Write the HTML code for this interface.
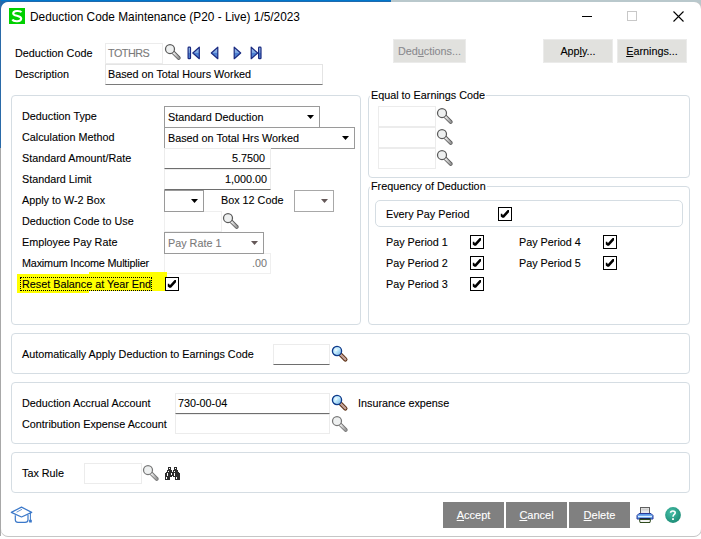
<!DOCTYPE html>
<html><head><meta charset="utf-8">
<style>
html,body{margin:0;padding:0;}
body{width:701px;height:539px;position:relative;overflow:hidden;background:#fff;font-family:"Liberation Sans",sans-serif;font-size:10.5px;color:#000;}
.a{position:absolute;}
.t{position:absolute;white-space:nowrap;line-height:12px;font-size:10.8px;-webkit-text-stroke-width:0.1px;}
.grp{position:absolute;border:1px solid #d5dde3;border-radius:4px;box-sizing:border-box;}
.inp{position:absolute;box-sizing:border-box;border:1px solid #ececec;background:#fff;}
.inpd{position:absolute;box-sizing:border-box;border:1px solid #ececec;border-bottom:1px solid #6e6e6e;background:#fff;}
.cmb{position:absolute;box-sizing:border-box;border:1px solid #9a9a9a;background:#fff;}
.arr{position:absolute;width:7px;height:4px;background:#000;clip-path:polygon(0 0,100% 0,50% 100%);}
.arrg{background:#645858;}
.btn{position:absolute;box-sizing:border-box;background:#e1e1de;border:1px solid #ebebea;text-align:center;}
.bbtn{position:absolute;box-sizing:border-box;background:#808080;color:#fff;text-align:center;font-size:11px;}
.chk{position:absolute;box-sizing:border-box;width:14px;height:14px;border:1px solid #000;background:#fff;}
.chk svg{position:absolute;left:0;top:0;}
.lbl{position:absolute;background:#fff;padding:0 1px;}
</style></head><body>
<svg width="0" height="0" style="position:absolute">
<defs>
<linearGradient id="hg" x1="0" y1="0" x2="1" y2="1"><stop offset="0" stop-color="#f4f4f4"/><stop offset="1" stop-color="#9a9a9a"/></linearGradient>
<linearGradient id="bg" x1="0" y1="0" x2="1" y2="1"><stop offset="0" stop-color="#8cc0ec"/><stop offset="0.45" stop-color="#c8f0ff"/><stop offset="1" stop-color="#6aa8e0"/></linearGradient>
<linearGradient id="ng" x1="0" y1="0" x2="0" y2="1"><stop offset="0" stop-color="#a8c8f0"/><stop offset="0.5" stop-color="#7aa4e0"/><stop offset="0.5" stop-color="#4a7ed0"/><stop offset="1" stop-color="#5a8ad8"/></linearGradient>
<g id="mag">
 <line x1="11.2" y1="10.4" x2="16.7" y2="15.9" stroke="#5e5e5e" stroke-width="4" stroke-linecap="round"/>
 <line x1="11.2" y1="10.4" x2="16.7" y2="15.9" stroke="url(#hg)" stroke-width="2.1" stroke-linecap="round"/>
 <circle cx="8" cy="7" r="4.5" fill="#eef0f0" stroke="#5a5a5a" stroke-width="1.25"/>
</g>
<g id="magl">
 <line x1="11.2" y1="10.4" x2="16.7" y2="15.9" stroke="#777" stroke-width="4" stroke-linecap="round"/>
 <line x1="11.2" y1="10.4" x2="16.7" y2="15.9" stroke="url(#hg)" stroke-width="2.1" stroke-linecap="round"/>
 <circle cx="8" cy="7" r="4.5" fill="#eef0f0" stroke="#777" stroke-width="1.25"/>
</g>
<g id="magb">
 <line x1="10.5" y1="10.5" x2="15.4" y2="15.4" stroke="#5a2e10" stroke-width="4.2" stroke-linecap="round"/>
 <line x1="10.5" y1="10.5" x2="15.4" y2="15.4" stroke="#c4a49c" stroke-width="2.2" stroke-linecap="round"/>
 <circle cx="7" cy="7" r="4.6" fill="url(#bg)" stroke="#0e3a8a" stroke-width="1.3"/>
 <circle cx="5.8" cy="5.6" r="1.6" fill="#fff" opacity="0.6"/>
</g>
<g id="tri"><path d="M7.3 0.7 L7.3 12.2 L0.8 6.45 Z" fill="url(#ng)" stroke="#1a2a80" stroke-width="1.2" stroke-linejoin="round"/></g>
<g id="bar"><rect x="0.6" y="0.7" width="2.4" height="11.5" rx="0.8" fill="url(#ng)" stroke="#1a2a80" stroke-width="1.2"/></g>
<g id="chk"><path d="M1.8 5.8 L3.2 5.8 L3.8 7.2 L8.6 1.9 L10 1.9 L10 4.2 L5 9.7 L3.4 9.7 L1.8 8.4 Z" fill="#000"/></g>
</defs></svg>
<!-- window frame -->
<div class="a" style="left:0;top:0;width:391px;height:12px;background:#1f6aad"></div>
<div class="a" style="left:0;top:0;width:391px;height:1px;background:#0077cc"></div>
<div class="a" style="left:391px;top:0;width:310px;height:12px;background:#b9c8cc"></div>
<div class="a" style="left:0;top:0;width:1px;height:148px;background:#2a6aa8"></div>
<div class="a" style="left:0;top:148px;width:1px;height:390px;background:#a8a8a8"></div>
<div class="a" style="left:0;top:536px;width:701px;height:3px;background:#fff"></div>
<div class="a" style="left:1px;top:2px;width:700px;height:534px;background:#fff;border-radius:7px;box-shadow:0 1px 0 #c6c6c6,1px 0 0 #c6c6c6"></div>
<!-- title -->
<div class="a" style="left:9px;top:8px;width:16px;height:16px;background:#00d000"></div>
<svg class="a" style="left:9px;top:8px" width="16" height="16" viewBox="0 0 16 16"><path d="M12.4 4.3 C11.4 2.5 4.2 2.3 4.2 5.4 C4.2 8.3 12.2 7.3 12.2 10.6 C12.2 14.1 4.6 13.9 3.4 11.6" fill="none" stroke="#fff" stroke-width="2.1"/></svg>
<div class="t" style="left:30px;top:10.5px;font-size:11.85px;line-height:13px;-webkit-text-stroke-width:0">Deduction Code Maintenance (P20 - Live) 1/5/2023</div>
<!-- min / max / close -->
<div class="a" style="left:582px;top:16px;width:10px;height:1px;background:#000"></div>
<div class="a" style="left:627px;top:11px;width:10px;height:10px;box-sizing:border-box;border:1px solid #c8c8c8"></div>
<svg class="a" style="left:672px;top:10px" width="13" height="13" viewBox="0 0 13 13"><path d="M1.5 1.5 L11.5 11.5 M11.5 1.5 L1.5 11.5" stroke="#000" stroke-width="1.1"/></svg>

<!-- header fields -->
<div class="t" style="left:15px;top:47px">Deduction Code</div>
<div class="t" style="left:15px;top:68px">Description</div>
<div class="inp" style="left:105px;top:43px;width:58px;height:21px"></div>
<div class="t" style="left:108px;top:47px;color:#7a7a7a;letter-spacing:-0.5px">TOTHRS</div>
<div class="inpd" style="left:105px;top:64px;width:218px;height:21px;border-color:#e4e4e4 #e4e4e4 #7a7a7a #e4e4e4"></div>
<div class="t" style="left:108px;top:68px">Based on Total Hours Worked</div>

<!-- buttons top -->
<div class="btn" style="left:393px;top:39px;width:73px;height:24px"></div>
<div class="t" style="left:393px;top:45px;width:73px;text-align:center;color:#8a8a8e">Ded<u>u</u>ctions...</div>
<div class="btn" style="left:543px;top:39px;width:70px;height:24px"></div>
<div class="t" style="left:543px;top:45px;width:70px;text-align:center">App<u>l</u>y...</div>
<div class="btn" style="left:617px;top:39px;width:70px;height:24px"></div>
<div class="t" style="left:617px;top:45px;width:70px;text-align:center"><u>E</u>arnings...</div>

<!-- left group -->
<div class="grp" style="left:11px;top:95px;width:350px;height:230px"></div>
<div class="t" style="left:22px;top:110px">Deduction Type</div>
<div class="t" style="left:22px;top:131px">Calculation Method</div>
<div class="t" style="left:22px;top:152px">Standard Amount/Rate</div>
<div class="t" style="left:22px;top:173px">Standard Limit</div>
<div class="t" style="left:22px;top:194px">Apply to W-2 Box</div>
<div class="t" style="left:22px;top:215px">Deduction Code to Use</div>
<div class="t" style="left:22px;top:236px">Employee Pay Rate</div>
<div class="t" style="left:22px;top:257px;letter-spacing:-0.18px">Maximum Income Multiplier</div>

<div class="cmb" style="left:164px;top:106px;width:156px;height:22px"></div>
<div class="t" style="left:168px;top:111px">Standard Deduction</div>
<div class="arr" style="left:307px;top:115px"></div>
<div class="cmb" style="left:164px;top:127px;width:191px;height:22px"></div>
<div class="t" style="left:168px;top:132px">Based on Total Hrs Worked</div>
<div class="arr" style="left:342px;top:136px"></div>

<div class="inpd" style="left:164px;top:148px;width:107px;height:21px"></div>
<div class="t" style="left:164px;top:152px;width:101px;text-align:right">5.7500</div>
<div class="inpd" style="left:164px;top:169px;width:107px;height:21px"></div>
<div class="t" style="left:164px;top:173px;width:103px;text-align:right">1,000.00</div>

<div class="inp" style="left:164px;top:211px;width:58px;height:21px;border-color:#efefef"></div>
<div class="cmb" style="left:164px;top:190px;width:40px;height:22px"></div>
<div class="arr" style="left:191px;top:199px"></div>
<div class="t" style="left:221px;top:194px">Box 12 Code</div>
<div class="cmb" style="left:294px;top:190px;width:40px;height:22px;border-color:#a8a8a8"></div>
<div class="arr arrg" style="left:321px;top:199px"></div>


<div class="inp" style="left:164px;top:253px;width:107px;height:21px;border-color:#efefef"></div>
<div class="cmb" style="left:164px;top:232px;width:100px;height:22px;border-color:#9a9a9a"></div>
<div class="t" style="left:168px;top:237px;color:#7a7a7a">Pay Rate 1</div>
<div class="arr arrg" style="left:251px;top:241px"></div>
<div class="t" style="left:164px;top:257px;width:103px;text-align:right;color:#7a7a7a">.00</div>

<!-- highlight -->
<div class="a" style="left:17px;top:274px;width:72px;height:19px;background:#ffff00"></div>
<div class="a" style="left:89px;top:272px;width:78px;height:19px;background:#ffff00"></div>
<div class="a" style="left:20px;top:277px;width:132px;height:14px;box-sizing:border-box;border:1px dotted #000"></div>
<div class="t" style="left:22px;top:278px">Reset Balance at Year End</div>
<div class="chk" style="left:165px;top:277px"><svg width="12" height="12" viewBox="0 0 12 12"><use href="#chk"/></svg></div>

<!-- equal to earnings group -->
<div class="grp" style="left:368px;top:95px;width:322px;height:83px"></div>
<div class="lbl t" style="left:370px;top:89px">Equal to Earnings Code</div>
<div class="inp" style="left:378px;top:106px;width:58px;height:21px"></div>
<div class="inp" style="left:378px;top:127px;width:58px;height:21px"></div>
<div class="inp" style="left:378px;top:148px;width:58px;height:21px"></div>

<!-- frequency group -->
<div class="grp" style="left:368px;top:186px;width:322px;height:139px"></div>
<div class="lbl t" style="left:370px;top:180px">Frequency of Deduction</div>
<div class="grp" style="left:375px;top:200px;width:308px;height:27px;border-radius:5px"></div>
<div class="t" style="left:386px;top:208px">Every Pay Period</div>
<div class="chk" style="left:498px;top:207px"><svg width="12" height="12" viewBox="0 0 12 12"><use href="#chk"/></svg></div>
<div class="t" style="left:386px;top:236px">Pay Period 1</div>
<div class="t" style="left:386px;top:257px">Pay Period 2</div>
<div class="t" style="left:386px;top:278px">Pay Period 3</div>
<div class="t" style="left:519px;top:236px">Pay Period 4</div>
<div class="t" style="left:519px;top:257px">Pay Period 5</div>
<div class="chk" style="left:470px;top:235px"><svg width="12" height="12" viewBox="0 0 12 12"><use href="#chk"/></svg></div>
<div class="chk" style="left:470px;top:256px"><svg width="12" height="12" viewBox="0 0 12 12"><use href="#chk"/></svg></div>
<div class="chk" style="left:470px;top:277px"><svg width="12" height="12" viewBox="0 0 12 12"><use href="#chk"/></svg></div>
<div class="chk" style="left:603px;top:235px"><svg width="12" height="12" viewBox="0 0 12 12"><use href="#chk"/></svg></div>
<div class="chk" style="left:603px;top:256px"><svg width="12" height="12" viewBox="0 0 12 12"><use href="#chk"/></svg></div>

<!-- auto apply group -->
<div class="grp" style="left:11px;top:333px;width:679px;height:41px"></div>
<div class="t" style="left:22px;top:348px">Automatically Apply Deduction to Earnings Code</div>
<div class="inpd" style="left:273px;top:344px;width:57px;height:21px"></div>

<!-- accounts group -->
<div class="grp" style="left:11px;top:382px;width:679px;height:62px"></div>
<div class="t" style="left:22px;top:397px">Deduction Accrual Account</div>
<div class="t" style="left:22px;top:418px">Contribution Expense Account</div>
<div class="inpd" style="left:175px;top:393px;width:155px;height:21px"></div>
<div class="t" style="left:178px;top:397px">730-00-04</div>
<div class="inp" style="left:175px;top:414px;width:155px;height:20px"></div>
<div class="t" style="left:358px;top:397px">Insurance expense</div>

<!-- tax group -->
<div class="grp" style="left:11px;top:452px;width:679px;height:41px"></div>
<div class="t" style="left:22px;top:467px">Tax Rule</div>
<div class="inp" style="left:84px;top:463px;width:58px;height:21px"></div>

<!-- bottom buttons -->
<div class="bbtn" style="left:443px;top:502px;width:61px;height:26px"></div>
<div class="t" style="left:443px;top:509px;width:61px;text-align:center;color:#fff;font-size:11px"><u>A</u>ccept</div>
<div class="bbtn" style="left:506px;top:502px;width:61px;height:26px"></div>
<div class="t" style="left:506px;top:509px;width:61px;text-align:center;color:#fff;font-size:11px"><u>C</u>ancel</div>
<div class="bbtn" style="left:569px;top:502px;width:61px;height:26px"></div>
<div class="t" style="left:569px;top:509px;width:61px;text-align:center;color:#fff;font-size:11px"><u>D</u>elete</div>

<!-- icons -->
<svg class="a" style="left:162px;top:42px" width="20" height="20"><use href="#mag"/></svg>
<svg class="a" style="left:187px;top:46px" width="14" height="14"><g transform="translate(0.5,0.5)"><use href="#bar"/><g transform="translate(4.5,0)"><use href="#tri"/></g></g></svg>
<svg class="a" style="left:210px;top:46px" width="10" height="14"><g transform="translate(0.5,0.5)"><use href="#tri"/></g></svg>
<svg class="a" style="left:232px;top:46px" width="10" height="14"><g transform="translate(9.5,0.5) scale(-1,1)"><use href="#tri"/></g></svg>
<svg class="a" style="left:249px;top:46px" width="14" height="14"><g transform="translate(9.5,0.5) scale(-1,1)"><use href="#tri"/></g><g transform="translate(9,0.5)"><use href="#bar"/></g></svg>
<svg class="a" style="left:434px;top:106px" width="20" height="20"><use href="#mag"/></svg>
<svg class="a" style="left:434px;top:127px" width="20" height="20"><use href="#mag"/></svg>
<svg class="a" style="left:434px;top:148px" width="20" height="20"><use href="#mag"/></svg>
<svg class="a" style="left:220px;top:211px" width="20" height="20"><use href="#mag"/></svg>
<svg class="a" style="left:330px;top:344px" width="20" height="20"><use href="#magb"/></svg>
<svg class="a" style="left:330px;top:393px" width="20" height="20"><use href="#magb"/></svg>
<svg class="a" style="left:329px;top:414px" width="20" height="20"><use href="#magl"/></svg>
<svg class="a" style="left:140px;top:463px" width="20" height="20"><use href="#magl"/></svg>
<!-- binoculars -->
<svg class="a" style="left:165px;top:467px" width="15" height="13" viewBox="0 0 15 13" shape-rendering="crispEdges">
 <g fill="#2c2c2c"><rect x="3" y="0" width="3" height="3"/><rect x="9" y="0" width="3" height="3"/>
 <rect x="2" y="3" width="5" height="2"/><rect x="8" y="3" width="5" height="2"/>
 <rect x="1" y="5" width="6" height="1"/><rect x="8" y="5" width="6" height="1"/><rect x="0" y="6" width="7" height="4"/><rect x="8" y="6" width="7" height="4"/><rect x="7" y="5" width="1" height="4"/>
 <rect x="0" y="10" width="5" height="3"/><rect x="10" y="10" width="5" height="3"/></g>
 <g fill="#fff"><rect x="4" y="1" width="1" height="1"/><rect x="10" y="1" width="1" height="1"/>
 <rect x="3" y="4" width="1" height="1"/><rect x="9" y="4" width="1" height="1"/>
 <rect x="2" y="6" width="1" height="3"/><rect x="6" y="6" width="1" height="2"/><rect x="9" y="6" width="1" height="3"/>
 <rect x="1" y="10" width="1" height="2"/><rect x="11" y="10" width="1" height="2"/></g>
</svg>
<!-- printer -->
<svg class="a" style="left:636px;top:506px" width="18" height="18" viewBox="0 0 18 18">
 <rect x="4.5" y="1.5" width="9" height="6.5" fill="#e8e8e8" stroke="#606060" stroke-width="1"/>
 <rect x="5.5" y="2.5" width="7" height="2" fill="#d0d0d0"/>
 <path d="M1 9.5 L3 7.5 L15 7.5 L17 9.5 L17 13 L1 13 Z" fill="#5a9ae8" stroke="#2a3a9a" stroke-width="1"/>
 <rect x="2" y="9.8" width="14" height="1.4" fill="#e0f0ff"/>
 <rect x="3.5" y="12.2" width="11" height="1.4" fill="#101030"/>
 <path d="M3.5 13.5 L14.5 13.5 L14 16.5 L4 16.5 Z" fill="#f4f4f4" stroke="#2e4a1e" stroke-width="1"/>
</svg>
<!-- help -->
<svg class="a" style="left:664px;top:506px" width="18" height="18" viewBox="0 0 18 18">
 <defs><radialGradient id="hgr" cx="0.4" cy="0.35" r="0.7"><stop offset="0" stop-color="#48c0a8"/><stop offset="1" stop-color="#1a8a74"/></radialGradient></defs>
 <circle cx="9" cy="9" r="7.9" fill="url(#hgr)"/>
 <path d="M6.6 6.8 C6.6 4.6 11.2 4.4 11.2 6.8 C11.2 8.5 9 8.4 9 10.8" fill="none" stroke="#fff" stroke-width="1.6"/>
 <rect x="8.1" y="12.2" width="1.8" height="1.8" fill="#fff"/>
</svg>
<!-- grad cap -->
<svg class="a" style="left:10px;top:506px" width="24" height="18" viewBox="0 0 24 18">
 <path d="M1.3 6.4 L11.5 1.1 L21.7 6.4 L11.5 11 Z" fill="#fff" stroke="#3b78c9" stroke-width="1.2" stroke-linejoin="round"/>
 <path d="M5.3 9.2 L5.3 14 Q5.5 16.3 8 16.3 L15 16.3 Q18 16.3 18 14 L18 9" fill="none" stroke="#3b78c9" stroke-width="1.2"/>
 <line x1="20.4" y1="6.6" x2="20.4" y2="15" stroke="#3b78c9" stroke-width="1"/>
 <rect x="19.1" y="13.8" width="2.7" height="2.7" fill="#3b78c9"/>
 <path d="M6.6 6.2 L12 3.3" stroke="#3b78c9" stroke-width="0.8"/>
</svg>
</body></html>
